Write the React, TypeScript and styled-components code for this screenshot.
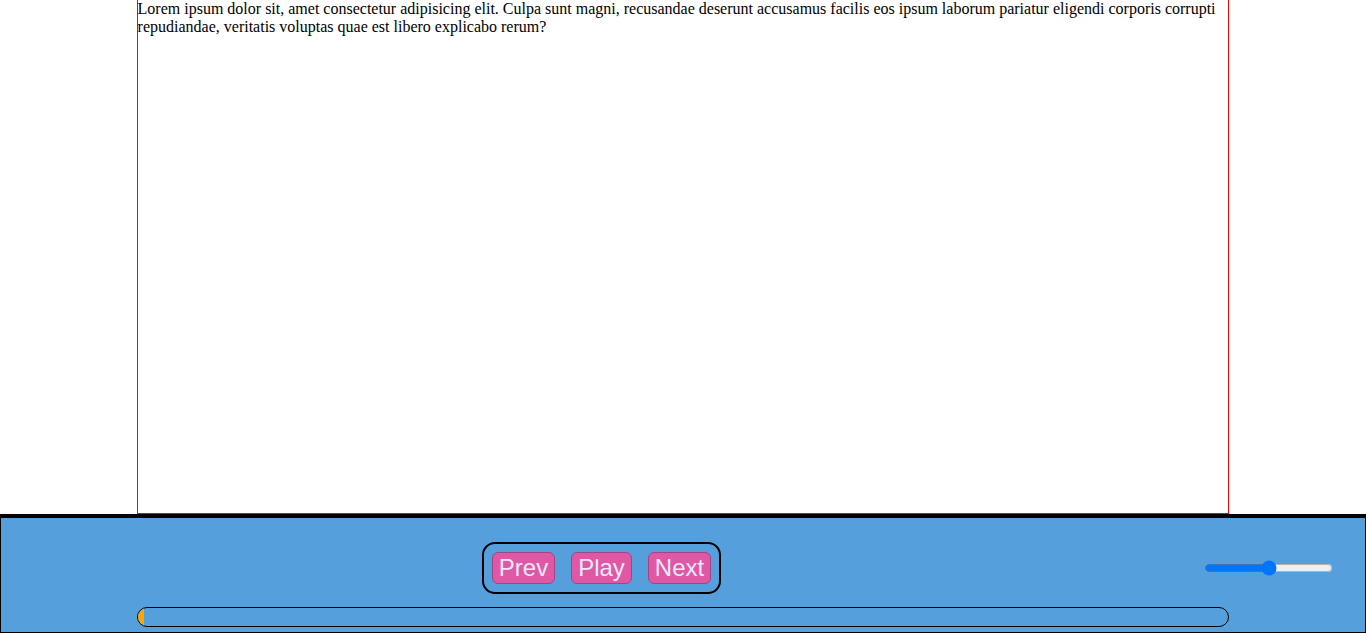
import React, { useState } from "react";
import styled, { createGlobalStyle } from "styled-components";

const GlobalStyle = createGlobalStyle`
  html, body {
    margin: 0;
    padding: 0;
    background: #ffffff;
  }
  body {
    font-family: "Liberation Serif", "Times New Roman", serif;
    font-size: 16px;
    color: #000;
  }
  * { box-sizing: border-box; }
`;

const Page = styled.div`
  display: flex;
  flex-direction: column;
  height: 100vh;
  overflow: hidden;
`;

const Content = styled.main`
  flex: 1;
  width: 80%;
  margin: 0 auto;
  border: 1px solid red;
  border-top: 0;
  min-height: 0;
`;

const Text = styled.p`
  margin: 0;
  line-height: normal;
`;

const Footer = styled.footer`
  height: 119px;
  flex-shrink: 0;
  background: #559fdd;
  border: 1px solid #000;
  border-top: 4px solid #000;
  padding-top: 24px;
  display: flex;
  flex-direction: column;
  gap: 13px;
`;

const ControlsRow = styled.div`
  display: flex;
  align-items: center;
  padding-right: 30px;
`;

const CenterArea = styled.div`
  flex: 1;
  display: flex;
  justify-content: center;
`;

const ButtonGroup = styled.div`
  display: flex;
  border: 2px solid #000;
  border-radius: 13px;
`;

const ControlButton = styled.button`
  margin: 8px;
  padding: 1px 6px;
  font-family: "Liberation Sans", Arial, sans-serif;
  font-size: 24px;
  line-height: normal;
  color: #eee8ff;
  background: #e057a3;
  border: 1px solid #a24587;
  border-radius: 6px;
  cursor: pointer;
`;

const Volume = styled.input`
  width: 129px;
  margin: 2px;
`;

const ProgressTrack = styled.div`
  width: 80%;
  margin: 0 auto;
  height: 20px;
  border: 1px solid #000;
  border-radius: 10px;
  overflow: hidden;
  display: flex;
`;

const ProgressFill = styled.div`
  height: 100%;
  background: orange;
`;

export default function App() {
  const [volume, setVolume] = useState(50);
  const progress = 0.5;
  return (
    <>
      <GlobalStyle />
      <Page>
        <Content>
          <Text>
            Lorem ipsum dolor sit, amet consectetur adipisicing elit. Culpa sunt magni, recusandae deserunt
            accusamus facilis eos ipsum laborum pariatur eligendi corporis corrupti repudiandae, veritatis
            voluptas quae est libero explicabo rerum?
          </Text>
        </Content>
        <Footer>
          <ControlsRow>
            <CenterArea>
              <ButtonGroup>
                <ControlButton>Prev</ControlButton>
                <ControlButton>Play</ControlButton>
                <ControlButton>Next</ControlButton>
              </ButtonGroup>
            </CenterArea>
            <Volume
              type="range"
              min={0}
              max={100}
              value={volume}
              onChange={(e) => setVolume(Number(e.target.value))}
            />
          </ControlsRow>
          <ProgressTrack>
            <ProgressFill style={{ width: `${progress}%` }} />
          </ProgressTrack>
        </Footer>
      </Page>
    </>
  );
}
